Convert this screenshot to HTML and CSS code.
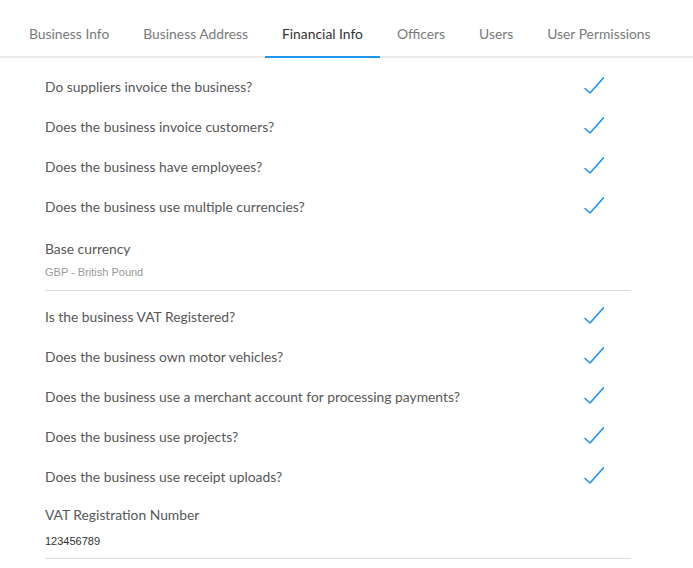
FILE: index.html
```html
<!DOCTYPE html>
<html lang="en">
<head>
<meta charset="utf-8">
<title>Financial Info</title>
<link rel="stylesheet" href="styles.css">
</head>
<body>
<nav class="tabs">
  <a class="tab">Business Info</a>
  <a class="tab">Business Address</a>
  <a class="tab tab--active">Financial Info</a>
  <a class="tab">Officers</a>
  <a class="tab">Users</a>
  <a class="tab">User Permissions</a>
</nav>
<main class="content">
  <div class="row"><span class="q">Do suppliers invoice the business?</span><svg class="check" viewBox="0 0 20 17"><polyline points="1,11.5 6,16 19.5,0.8"/></svg></div>
  <div class="row"><span class="q">Does the business invoice customers?</span><svg class="check" viewBox="0 0 20 17"><polyline points="1,11.5 6,16 19.5,0.8"/></svg></div>
  <div class="row"><span class="q">Does the business have employees?</span><svg class="check" viewBox="0 0 20 17"><polyline points="1,11.5 6,16 19.5,0.8"/></svg></div>
  <div class="row"><span class="q">Does the business use multiple currencies?</span><svg class="check" viewBox="0 0 20 17"><polyline points="1,11.5 6,16 19.5,0.8"/></svg></div>
  <div class="field field--first">
    <div class="label">Base currency</div>
    <div class="value value--muted">GBP - British Pound</div>
  </div>
  <div class="row row--after-field"><span class="q">Is the business VAT Registered?</span><svg class="check" viewBox="0 0 20 17"><polyline points="1,11.5 6,16 19.5,0.8"/></svg></div>
  <div class="row"><span class="q">Does the business own motor vehicles?</span><svg class="check" viewBox="0 0 20 17"><polyline points="1,11.5 6,16 19.5,0.8"/></svg></div>
  <div class="row"><span class="q">Does the business use a merchant account for processing payments?</span><svg class="check" viewBox="0 0 20 17"><polyline points="1,11.5 6,16 19.5,0.8"/></svg></div>
  <div class="row"><span class="q">Does the business use projects?</span><svg class="check" viewBox="0 0 20 17"><polyline points="1,11.5 6,16 19.5,0.8"/></svg></div>
  <div class="row"><span class="q">Does the business use receipt uploads?</span><svg class="check" viewBox="0 0 20 17"><polyline points="1,11.5 6,16 19.5,0.8"/></svg></div>
  <div class="field field--second">
    <div class="label">VAT Registration Number</div>
    <div class="value">123456789</div>
  </div>
</main>
</body>
</html>
```
FILE: styles.css
```css
html, body {
  margin: 0;
  padding: 0;
  background: #fff;
}
body {
  font-family: Lato, "Noto Sans", sans-serif;
  font-size: 13.85px;
  color: #585858;
}
.tabs {
  display: flex;
  padding-left: 12px;
  border-bottom: 2px solid #ebebeb;
}
.tab {
  display: block;
  padding: 24px 17px 12px;
  line-height: 20px;
  color: #7a7a7a;
  border-bottom: 2px solid transparent;
  margin-bottom: -2px;
  cursor: pointer;
}
.tab--active {
  color: #333;
  border-bottom-color: #2196f3;
}
.content {
  width: 586px;
  margin-left: 45px;
  padding-top: 9px;
}
.row {
  height: 40px;
  display: flex;
  align-items: center;
  justify-content: space-between;
}
.row--after-field {
  margin-top: 6px;
}
.q {
  line-height: 20px;
}
.check {
  width: 20px;
  height: 17px;
  margin-right: 27px;
  margin-bottom: 3px;
  fill: none;
  stroke: #2196f3;
  stroke-width: 1.6;
  stroke-linecap: round;
  stroke-linejoin: round;
}
.field {
  padding-bottom: 9px;
  border-bottom: 1px solid #dcdcdc;
}
.field--first {
  padding-top: 12px;
  padding-bottom: 10px;
}
.field--second {
  padding-top: 8px;
}
.label {
  line-height: 20px;
}
.value {
  margin-top: 5px;
  line-height: 16px;
  font-family: "Liberation Sans", Arial, sans-serif;
  font-size: 11px;
  color: #333;
}
.field--second .value {
  margin-top: 8px;
}
.value--muted {
  color: #999;
}
```
